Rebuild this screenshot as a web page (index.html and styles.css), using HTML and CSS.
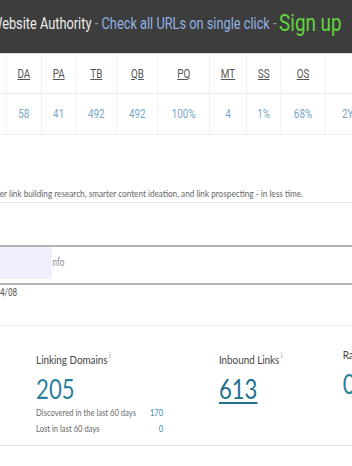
FILE: index.html
```html
<!DOCTYPE html>
<html>
<head>
<meta charset="utf-8">
<link rel="stylesheet" href="styles.css">
</head>
<body>
<div class="page">
  <div class="topbar">
    <span class="wa">Website Authority</span>
    <span class="dash">-</span>
    <span class="check">Check all URLs on single click</span>
    <span class="dash">-</span>
    <span class="signup">Sign up</span>
  </div>

  <table class="metrics">
    <colgroup>
      <col class="c0"><col class="c1"><col class="c2"><col class="c3"><col class="c4"><col class="c5"><col class="c6"><col class="c7"><col class="c8"><col class="c9">
    </colgroup>
    <tr class="head">
      <th></th><th><u>DA</u></th><th><u>PA</u></th><th><u>TB</u></th><th><u>QB</u></th><th><u>PQ</u></th><th><u>MT</u></th><th><u>SS</u></th><th><u>OS</u></th><th></th>
    </tr>
    <tr class="data">
      <td></td><td>58</td><td>41</td><td>492</td><td>492</td><td>100%</td><td>4</td><td>1%</td><td>68%</td><td class="age">2Y</td>
    </tr>
  </table>

  <p class="desc">better link building research, smarter content ideation, and link prospecting - in less time.</p>
  <div class="rule"></div>

  <div class="field">
    <span class="fill"></span>
    <span class="lbl">nfo</span>
  </div>
  <div class="date">4/08</div>

  <div class="cards">
    <div class="card c-ld">
      <div class="title">Linking Domains<sup>i</sup></div>
      <div class="big">205</div>
      <div class="sub"><span>Discovered in the last 60 days</span><span class="num">170</span></div>
      <div class="sub"><span>Lost in last 60 days</span><span class="num">0</span></div>
    </div>
    <div class="card c-il">
      <div class="title">Inbound Links<sup>i</sup></div>
      <div class="big link">613</div>
    </div>
    <div class="card">
      <div class="title">Ranking Keywords</div>
      <div class="big">0</div>
    </div>
  </div>
</div>
</body>
</html>
```

FILE: styles.css
```css
html, body {
  margin: 0;
  padding: 0;
  background: #ffffff;
  overflow: hidden;
}
body {
  width: 352px;
  height: 466px;
}
.page {
  width: 430px;
  transform: scaleX(0.82);
  transform-origin: 0 0;
  font-family: Lato, "Open Sans", sans-serif;
}
.topbar {
  height: 53px;
  background: #3d3d3d;
  display: flex;
  align-items: center;
  gap: 4px;
  white-space: nowrap;
  font-family: Roboto, "Liberation Sans", sans-serif;
  font-size: 15.6px;
  margin-left: -11px;
  padding-bottom: 6px;
  box-sizing: border-box;
}
.wa { color: #ececec; }
.dash { color: #9a9a9a; }
.check { color: #8fb2e2; }
.signup { color: #5fd63d; font-size: 23px; margin-left: -1px; }

.metrics {
  border-collapse: collapse;
  table-layout: fixed;
  width: 510px;
  margin-left: -33px;
  font-family: Roboto, "Liberation Sans", sans-serif;
  font-size: 12px;
}
.c0 { width: 40px; }
.c1 { width: 43px; }
.c2 { width: 42px; }
.c3 { width: 50px; }
.c4 { width: 50px; }
.c5 { width: 63px; }
.c6 { width: 45px; }
.c7 { width: 42px; }
.c8 { width: 54px; }
.c9 { width: 81px; }
.metrics th, .metrics td {
  border: 1px solid #ececec;
  text-align: center;
  padding: 0;
}
.metrics tr:first-child th { border-top: 1px solid #d8d8d8; }
.head th {
  height: 39px;
  color: #555555;
  font-weight: 400;
}
.data td {
  height: 40px;
  color: #78a6c6;
}
.metrics td.age { text-align: left; padding-left: 20px; }

.desc {
  margin: 52px 0 0 0;
  font-size: 10px;
  line-height: 12px;
  color: #666666;
  white-space: nowrap;
  text-indent: -18px;
}
.rule {
  margin-top: 3px;
  height: 1px;
  background: #e6e6e6;
}
.field {
  margin-top: 42px;
  height: 36px;
  border-top: 2px solid #b4b4b4;
  border-bottom: 2px solid #b4b4b4;
  display: flex;
  align-items: flex-start;
}
.fill {
  width: 63px;
  height: 32px;
  background: #eeeefd;
}
.lbl {
  font-family: Roboto, "Liberation Sans", sans-serif;
  font-size: 10px;
  color: #8a8a8a;
  line-height: 32px;
  padding-left: 1px;
}
.date {
  margin-top: 2px;
  font-family: Roboto, "Liberation Sans", sans-serif;
  font-size: 10px;
  line-height: 12px;
  color: #555555;
}
.cards {
  margin-top: 26px;
  border-top: 1px solid #efefef;
  border-bottom: 1px solid #e2e2e2;
  height: 121px;
  box-sizing: border-box;
  display: flex;
  gap: 68px;
  padding: 22px 0 0 44px;
  white-space: nowrap;
}
.card { display: flex; flex-direction: column; flex-shrink: 0; }
.c-ld { width: 155px; }
.c-il { width: 83px; }
.title {
  font-size: 12px;
  line-height: 14px;
  color: #454545;
}
.title sup {
  font-size: 7px;
  color: #777;
  margin-left: 2px;
  vertical-align: 6px;
}
.big {
  margin-top: 7px;
  font-size: 27px;
  line-height: 30px;
  color: #2c7f9c;
}
.big.link {
  color: #25708e;
  text-decoration: underline;
  text-decoration-thickness: 2px;
  text-underline-offset: 3px;
}
.sub {
  display: flex;
  justify-content: space-between;
  font-size: 9.3px;
  line-height: 16px;
  color: #6a6a6a;
}
.big + .sub { margin-top: 1px; }
.sub .num { color: #3a8ab0; }
```
